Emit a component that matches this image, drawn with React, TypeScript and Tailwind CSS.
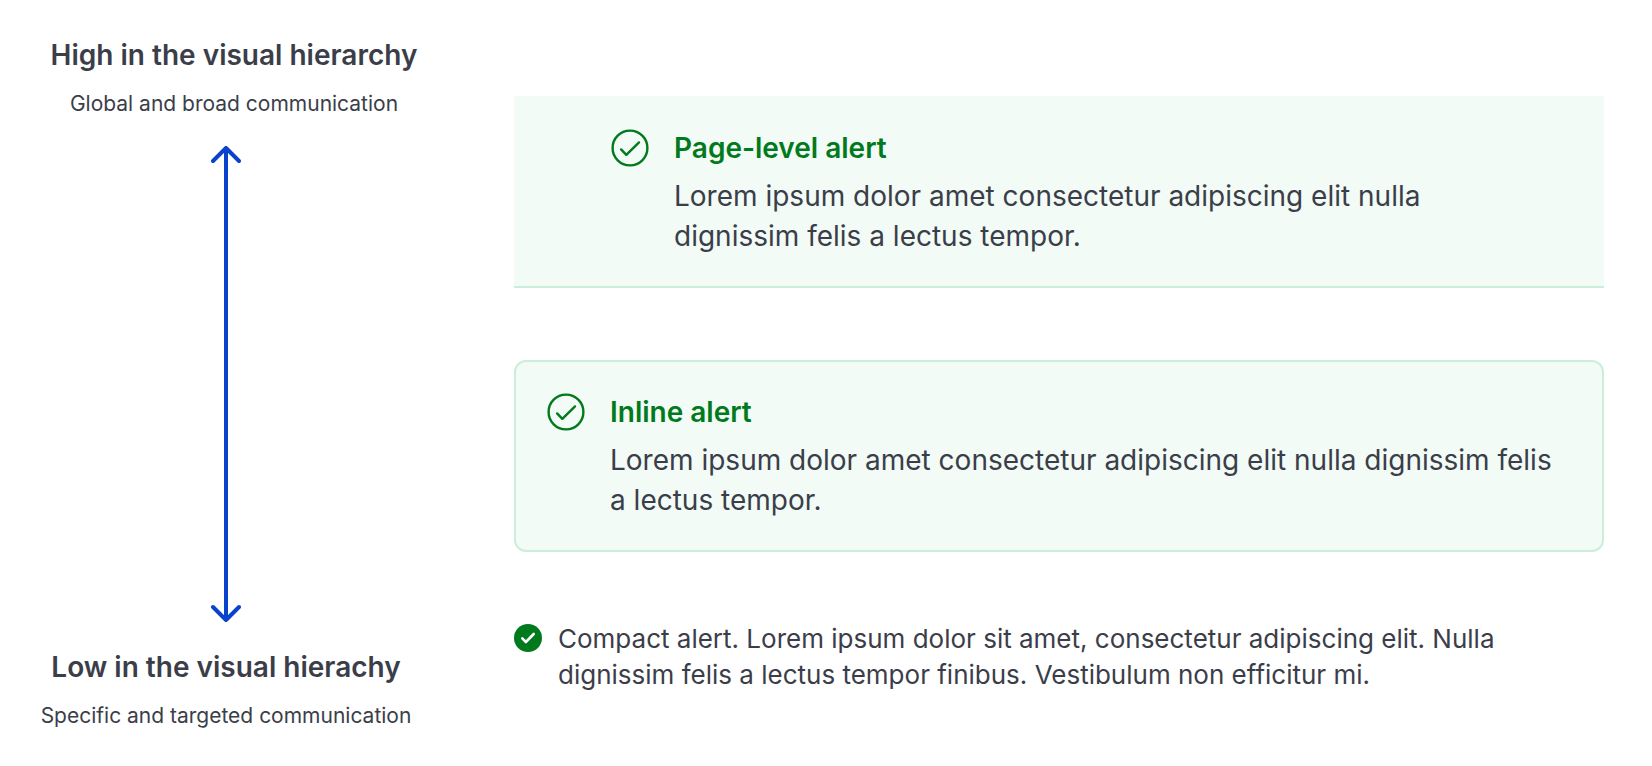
import type { ReactNode } from "react";

function CircleCheck() {
  return (
    <svg viewBox="0 0 40 40" fill="none" stroke="#007a1c" strokeWidth="2.4" className="size-10 shrink-0" aria-hidden="true">
      <circle cx="20" cy="20" r="17.4" />
      <path d="M11.1 21.4l5.2 5.4L29 14.4" strokeLinejoin="round" strokeLinecap="round" />
    </svg>
  );
}

function SolidCheck() {
  return (
    <svg viewBox="0 0 28 28" fill="none" className="mt-[3px] size-7 shrink-0" aria-hidden="true">
      <circle cx="14" cy="14" r="14" fill="#007a1c" />
      <path d="M8.3 14.4l3.6 3.6 7.8-8" stroke="#fff" strokeWidth="2.6" strokeLinejoin="round" strokeLinecap="round" />
    </svg>
  );
}

function LevelArrow() {
  return (
    <svg
      viewBox="0 0 30 476"
      fill="none"
      stroke="#0943cc"
      strokeWidth="4"
      strokeLinecap="round"
      strokeLinejoin="round"
      className="h-[476px] w-[30px]"
      aria-hidden="true"
    >
      <path d="M15 3v470M2 15L15 2l13 13M2 461l13 13 13-13" />
    </svg>
  );
}

function Level({ title, note }: { title: string; note: string }) {
  return (
    <div>
      <h2 className="text-[28px] leading-[38px] font-semibold">{title}</h2>
      <p className="mt-[14px] text-[21px] leading-8">{note}</p>
    </div>
  );
}

function Alert({ title, frame, children }: { title: string; frame: "page" | "inline"; children: ReactNode }) {
  const frames = {
    page: "border-b-2 px-24 pt-8",
    inline: "rounded-xl border-2 px-[30px] pt-[30px]",
  };
  return (
    <div role="status" className={`flex gap-6 border-[#cbeedb] bg-[#f2fbf6] pb-[30px] ${frames[frame]}`}>
      <CircleCheck />
      <div className="min-w-0">
        <h3 className="text-[28px] leading-10 font-semibold text-[#007a1c]">{title}</h3>
        <p className="mt-2 text-[28px] leading-10">{children}</p>
      </div>
    </div>
  );
}

export default function App() {
  return (
    <main className="flex gap-[62px] bg-white pt-9 pr-12 font-['Inter',sans-serif] text-[#3b3e49]">
      <section className="flex w-[452px] shrink-0 flex-col items-center gap-[26px] text-center">
        <div className="pl-4">
          <Level title="High in the visual hierarchy" note="Global and broad communication" />
        </div>
        <LevelArrow />
        <Level title="Low in the visual hierachy" note="Specific and targeted communication" />
      </section>
      <section className="min-w-0 flex-1 pt-[60px]">
        <Alert title="Page-level alert" frame="page">
          Lorem ipsum dolor amet consectetur adipiscing elit nulla dignissim felis a lectus tempor.
        </Alert>
        <div className="mt-[72px]">
          <Alert title="Inline alert" frame="inline">
            Lorem ipsum dolor amet consectetur adipiscing elit nulla dignissim felis a lectus tempor.
          </Alert>
        </div>
        <div role="status" className="mt-[69px] flex gap-4 pr-12">
          <SolidCheck />
          <p className="min-w-0 text-[26px] leading-9">
            Compact alert. Lorem ipsum dolor sit amet, consectetur adipiscing elit. Nulla dignissim felis a lectus tempor
            finibus. Vestibulum non efficitur mi.
          </p>
        </div>
      </section>
    </main>
  );
}
